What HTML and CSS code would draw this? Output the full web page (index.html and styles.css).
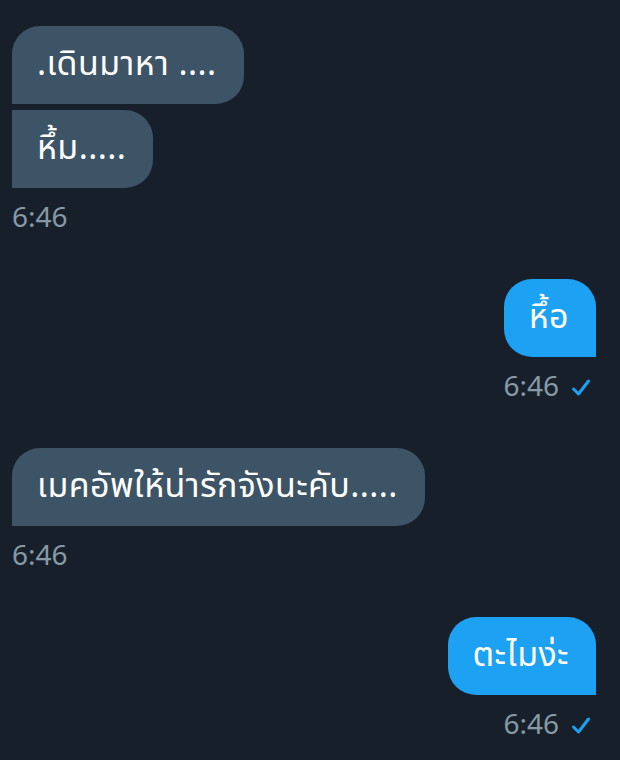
FILE: index.html
```html
<!DOCTYPE html>
<html lang="th">
<head>
<meta charset="utf-8">
<link rel="stylesheet" href="styles.css">
</head>
<body>
<div class="chat">
  <div class="group in">
    <div class="bubble first">.เดินมาหา ....</div>
    <div class="bubble last">หึ้ม.....</div>
    <div class="meta">6:46</div>
  </div>
  <div class="group out">
    <div class="bubble single">หึ้อ</div>
    <div class="meta">6:46 <svg class="check" viewBox="0 0 20 20" width="20" height="20"><path d="M2.5 11 L7.5 16 L17.5 3" fill="none" stroke="#1da1f2" stroke-width="3" stroke-linecap="round" stroke-linejoin="round"/></svg></div>
  </div>
  <div class="group in">
    <div class="bubble single">เมคอัพให้น่ารักจังนะคับ.....</div>
    <div class="meta">6:46</div>
  </div>
  <div class="group out">
    <div class="bubble single">ตะไมง่ะ</div>
    <div class="meta">6:46 <svg class="check" viewBox="0 0 20 20" width="20" height="20"><path d="M2.5 11 L7.5 16 L17.5 3" fill="none" stroke="#1da1f2" stroke-width="3" stroke-linecap="round" stroke-linejoin="round"/></svg></div>
  </div>
</div>
</body>
</html>
```
FILE: styles.css
```css
html, body {
  margin: 0;
  padding: 0;
  background: #17202a;
  height: 100%;
}
body {
  font-family: "Noto Sans Thai", "Noto Sans", "DejaVu Sans", sans-serif;
  color: #ffffff;
}
.chat {
  padding: 26px 24px 0 12px;
  display: flex;
  flex-direction: column;
  gap: 45px;
}
.group {
  display: flex;
  flex-direction: column;
  gap: 6px;
}
.group.in { align-items: flex-start; }
.group.out { align-items: flex-end; }
.bubble {
  font-size: 34px;
  line-height: 38px;
  padding: 20px 27px 20px 25px;
  border-radius: 28px;
  white-space: nowrap;
  letter-spacing: 0.4px;
}
.in .bubble { background: #3d5466; }
.out .bubble { background: #1da1f2; }
.in .bubble.first { border-bottom-left-radius: 0; }
.in .bubble.last { border-top-left-radius: 0; border-bottom-left-radius: 0; }
.in .bubble.single { border-bottom-left-radius: 0; }
.out .bubble.single { border-bottom-right-radius: 0; }
.meta {
  margin-top: 10px;
  font-size: 28px;
  line-height: 30px;
  color: #8899a6;
  display: flex;
  align-items: center;
  gap: 12px;
}
.out .meta { padding-right: 5px; }
.check { display: block; }
```
